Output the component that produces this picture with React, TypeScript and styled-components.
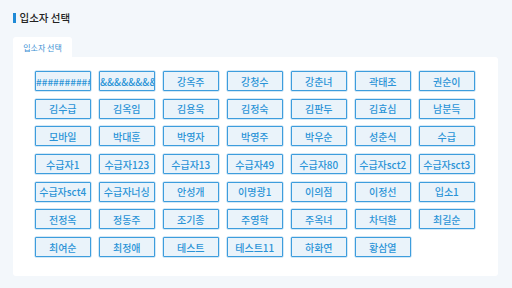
import styled, { createGlobalStyle } from "styled-components";

const NAMES = [
  "##########",
  "&&&&&&&&&",
  "강옥주",
  "강청수",
  "강춘녀",
  "곽태조",
  "권순이",
  "김수급",
  "김옥임",
  "김용욱",
  "김정숙",
  "김판두",
  "김효심",
  "남분득",
  "모바일",
  "박대훈",
  "박영자",
  "박영주",
  "박우순",
  "성춘식",
  "수급",
  "수급자1",
  "수급자123",
  "수급자13",
  "수급자49",
  "수급자80",
  "수급자sct2",
  "수급자sct3",
  "수급자sct4",
  "수급자너싱",
  "안성개",
  "이명광1",
  "이의점",
  "이정선",
  "입소1",
  "전정옥",
  "정동주",
  "조기종",
  "주영학",
  "주옥녀",
  "차덕환",
  "최길순",
  "최여순",
  "최정애",
  "테스트",
  "테스트11",
  "하화연",
  "황삼열",
];

const GlobalStyle = createGlobalStyle`
  html, body {
    margin: 0;
    padding: 0;
    background: #f3f7fb;
    font-family: "Noto Sans CJK KR", "Noto Sans", sans-serif;
  }
`;

const App = () => {
  return (
    <>
      <GlobalStyle />
      <Page>
        <Header>
          <Accent />
          <Title>입소자 선택</Title>
        </Header>
        <Tabs>
          <Tab>입소자 선택</Tab>
        </Tabs>
        <Panel>
          <Grid>
            {NAMES.map((name, i) => (
              <NameButton key={i}>
                <Label>{name}</Label>
              </NameButton>
            ))}
          </Grid>
        </Panel>
      </Page>
    </>
  );
};

export default App;

const Page = styled.div`
  width: 512px;
  height: 288px;
  box-sizing: border-box;
  padding: 11px 14px 0 13px;
  display: flex;
  flex-direction: column;
`;

const Header = styled.div`
  display: flex;
  align-items: center;
  gap: 4px;
  height: 13px;
`;

const Accent = styled.span`
  width: 2.5px;
  height: 10px;
  background: #1f8ad6;
`;

const Title = styled.span`
  font-size: 10.5px;
  font-weight: 500;
  color: #222;
  line-height: 13px;
`;

const Tabs = styled.div`
  display: flex;
  margin-top: 13px;
`;

const Tab = styled.div`
  width: 59px;
  height: 20px;
  background: #fff;
  border-radius: 3px 3px 0 0;
  display: flex;
  align-items: center;
  justify-content: center;
  font-size: 8px;
  color: #3b8fd3;
`;

const Panel = styled.div`
  background: #fff;
  border-radius: 0 3px 3px 3px;
  height: 219px;
  box-sizing: border-box;
  padding: 14px 22px 0 22px;
`;

const Grid = styled.div`
  display: grid;
  grid-template-columns: repeat(7, 55.5px);
  column-gap: 8.5px;
  row-gap: 7.7px;
`;

const NameButton = styled.button`
  height: 20px;
  padding: 0;
  margin: 0;
  box-sizing: border-box;
  border: 1px solid #3d9ddd;
  border-radius: 1px;
  background: #eaf3fa;
  box-shadow: 0 0 0 0.5px #a9d1ee;
  color: #2a93d7;
  font-family: "Noto Sans CJK KR", "Noto Sans", sans-serif;
  font-size: 10px;
  font-weight: 500;
  overflow: hidden;
  display: flex;
  align-items: center;
  justify-content: safe center;
`;

const Label = styled.span`
  white-space: nowrap;
  flex-shrink: 0;
`;
